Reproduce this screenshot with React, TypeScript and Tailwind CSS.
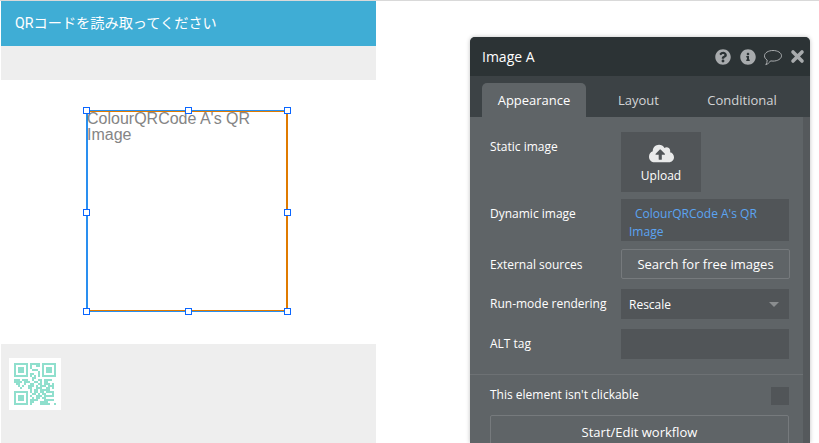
import React from "react";
import { FaCloudUploadAlt, FaInfoCircle, FaQuestionCircle } from "react-icons/fa";

const QR_ROWS = [
  "111111101111101111111",
  "100000101001101000001",
  "101110101000001011101",
  "101110100111001011101",
  "101110100000101011101",
  "100000101100101000001",
  "111111101010101111111",
  "000000000110000000000",
  "111011100100110111100",
  "111101110011010110000",
  "011001001100110111010",
  "001010011101011101110",
  "000100011001110011010",
  "000000001011011111000",
  "111111101011011011110",
  "100000100110101100010",
  "101110101001110111110",
  "101110100101101100000",
  "101110101111000111110",
  "100000101100011110000",
  "111111101000011111001",
].map((row) => row.split(""));

const QrCode = () => (
  <svg width="52" height="52" viewBox="-5 -5 52 52" className="bg-white">
    {QR_ROWS.map((row, y) =>
      row.map((cell, x) =>
        cell === "1" ? (
          <rect key={`${x}-${y}`} x={x * 2} y={y * 2} width="2" height="2" fill="#8fdfcd" />
        ) : null,
      ),
    )}
  </svg>
);

const Handle = ({ className }: { className: string }) => (
  <div className={`absolute size-[7px] border border-[#0a66ff] bg-white ${className}`} />
);

const PropertyRow = ({
  label,
  className,
  labelClassName = "",
  children,
}: {
  label: string;
  className: string;
  labelClassName?: string;
  children: React.ReactNode;
}) => (
  <div className={`flex ${className}`}>
    <div className={`w-[151px] shrink-0 whitespace-nowrap pl-5 text-xs leading-[18px] text-white ${labelClassName}`}>
      {label}
    </div>
    {children}
  </div>
);

export default function App() {
  return (
    <div className="relative h-[443px] w-[819px] overflow-hidden bg-white font-['Open_Sans','Noto_Sans_CJK_JP',sans-serif]">
      <div className="h-px bg-[#d9d9d9]" />
      <div className="ml-px flex w-[375px] flex-col">
        <div className="flex h-[45px] items-center bg-[#3fadd5] pl-[14px] font-['Roboto','Noto_Sans_CJK_JP',sans-serif] text-[14.2px] text-white">
          QRコードを読み取ってください
        </div>
        <div className="h-[34px] bg-[#eeeeee]" />
        <div className="h-[264px] pl-[85px] pt-[30px]">
          <div className="relative size-[202px] border border-[#2a8ff0] border-r-[#e07b00]">
            <div className="size-full border border-[#e07b00] border-l-[#2a8ff0] font-['Liberation_Sans',sans-serif] text-base leading-4 text-[#858585]">
              <div className="-ml-px -mt-px w-[190px]">ColourQRCode A's QR Image</div>
            </div>
            <Handle className="-left-[4px] -top-[4px]" />
            <Handle className="left-[98px] -top-[4px]" />
            <Handle className="left-[197px] -top-[4px]" />
            <Handle className="-left-[4px] top-[98px]" />
            <Handle className="left-[197px] top-[98px]" />
            <Handle className="-left-[4px] top-[197px]" />
            <Handle className="left-[98px] top-[197px]" />
            <Handle className="left-[197px] top-[197px]" />
          </div>
        </div>
        <div className="h-[99px] bg-[#eeeeee] pl-2 pt-[14px]">
          <QrCode />
        </div>
      </div>

      <div className="absolute left-[470px] top-[37px] flex h-[406px] w-[340px] flex-col overflow-hidden rounded-t-[5px] bg-[#5f6467] shadow-[0_0_4px_rgba(0,0,0,0.25)]">
        <div className="flex h-[39px] shrink-0 items-center justify-between bg-[#2c3335] pl-3 pr-[5px]">
          <span className="text-sm text-white">Image A</span>
          <div className="flex items-center text-[#a8abad]">
            <FaQuestionCircle className="size-4" />
            <FaInfoCircle className="ml-[9px] size-4" />
            <svg width="20" height="18" viewBox="0 0 20 18" fill="none" stroke="currentColor" strokeWidth="1" className="ml-[7px] mt-[2px]">
              <path d="M10 1.5c4.6 0 8.5 2.3 8.5 5.3s-3.9 5.3-8.5 5.3c-.9 0-1.7-.1-2.500-.2-1 1.700-2.800 3.200-4.700 3.800.9-1.300 1.400-2.600 1.400-4.600C2.400 10.100 1.500 8.500 1.500 6.800 1.500 3.800 5.400 1.500 10 1.500z" />
            </svg>
            <svg width="15" height="15" viewBox="0 0 15 15" stroke="currentColor" strokeWidth="3.6" strokeLinecap="round" className="ml-[7px]">
              <path d="M3 3l9 9M12 3l-9 9" />
            </svg>
          </div>
        </div>
        <div className="flex h-[41px] shrink-0 bg-[#3c4245] pl-3 pt-[7px] text-[13px]">
          <div className="flex h-[34px] w-[104px] items-center justify-center rounded-t-[5px] bg-[#5f6467] pt-px text-white">
            Appearance
          </div>
          <div className="flex h-[34px] w-[105px] items-center justify-center pt-px text-[#d2d4d5]">Layout</div>
          <div className="flex h-[34px] w-[102px] items-center justify-center pt-px text-[#d2d4d5]">Conditional</div>
        </div>
        <div className="flex min-h-0 flex-1">
          <div className="min-w-0 flex-1 pt-[15px]">
            <PropertyRow label="Static image" className="h-[60px] items-start pt-[6px]">
              <div className="-mt-[6px] flex h-[60px] w-[80px] flex-col items-center bg-[#515558] pt-[9px] text-xs text-white">
                <FaCloudUploadAlt className="size-[25px] text-[#e9eaea]" />
                <span className="mt-px leading-[18px]">Upload</span>
              </div>
            </PropertyRow>
            <PropertyRow label="Dynamic image" className="mt-[7px] h-[42px] items-start pt-[6px]">
              <div className="-mt-[6px] h-[42px] w-[168px] bg-[#515558] pl-2 pt-[6px] text-xs leading-[18px] text-[#5ba4f2]">
                <span className="pl-[6px]">ColourQRCode A's QR</span>
                <br />
                Image
              </div>
            </PropertyRow>
            <PropertyRow label="External sources" className="mt-[8px] h-[30px] items-center" labelClassName="mt-[2px]">
              <div className="flex h-[30px] w-[169px] items-center justify-center rounded-[2px] border border-[#767a7d] bg-[#5f6467] pt-px text-[13px] text-white">
                Search for free images
              </div>
            </PropertyRow>
            <PropertyRow label="Run-mode rendering" className="mt-[10px] h-[30px] items-center">
              <div className="flex h-[30px] w-[168px] items-center justify-between bg-[#515558] pl-2 pr-[10px] pt-px text-xs text-white">
                Rescale
                <span className="border-x-[5px] border-t-[5px] border-x-transparent border-t-[#8a8d8f]" />
              </div>
            </PropertyRow>
            <PropertyRow label="ALT tag" className="mt-[10px] h-[30px] items-center">
              <div className="h-[30px] w-[168px] bg-[#515558]" />
            </PropertyRow>
            <div className="mt-[15px] h-px bg-[#6d7174]" />
            <PropertyRow label="This element isn't clickable" className="mt-[12px] h-[18px] items-center" labelClassName="-mt-[3px]">
              <div className="ml-auto mr-[14px] size-[18px] shrink-0 bg-[#515558]" />
            </PropertyRow>
            <div className="ml-5 mt-[10px] flex h-[36px] w-[299px] items-center justify-center rounded-[2px] border border-[#767a7d] text-[13px] text-white">
              Start/Edit workflow
            </div>
          </div>
          <div className="w-[7px] shrink-0 bg-[#55595c]" />
        </div>
      </div>
    </div>
  );
}
